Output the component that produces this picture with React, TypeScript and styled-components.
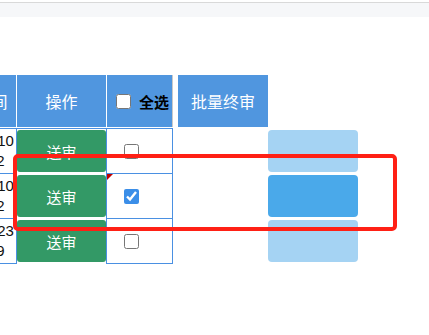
import React from "react";
import styled, { createGlobalStyle } from "styled-components";

const GlobalStyle = createGlobalStyle`
  html, body {
    margin: 0;
    padding: 0;
    background: #fff;
    overflow: hidden;
  }
  body {
    font-family: "Liberation Sans", "Noto Sans CJK SC", sans-serif;
  }
`;

const Page = styled.div`
  position: relative;
  width: 429px;
  height: 335px;
  overflow: hidden;
`;

const TopBar = styled.div`
  height: 14px;
  margin-top: 2px;
  border-top: 1px solid #d9d9d9;
  background: #f6f7f9;
`;

const Main = styled.div`
  display: flex;
  align-items: flex-start;
  padding-top: 58px;
`;

// table is scrolled sideways, so the time column is mostly hidden
const Table = styled.div`
  margin-left: -65px;
  display: flex;
  flex-direction: column;
`;

const HeadRow = styled.div`
  display: grid;
  grid-template-columns: 82px 90px 66px;
  border-bottom: 1px solid #fff;
`;

const HeadCell = styled.div<{ $gray?: boolean }>`
  height: 52px;
  background: #5096df;
  border-right: 1px solid ${(p) => (p.$gray ? "#c9c9c9" : "#fff")};
  color: #fff;
  font-size: 16px;
  display: flex;
  align-items: center;
  justify-content: center;
`;

const CheckHead = styled(HeadCell)`
  justify-content: flex-start;
  padding-left: 9px;
  gap: 8px;
  color: #000;
  font-weight: bold;
  font-size: 15px;
`;

const Body = styled.div`
  border-top: 1px solid #4a90e2;
`;

const Row = styled.div`
  display: grid;
  grid-template-columns: 82px 90px 66px;
  height: 45px;
`;

const TimeCell = styled.div`
  border-right: 1px solid #4a90e2;
  border-bottom: 1px solid #4a90e2;
  display: flex;
  flex-direction: column;
  justify-content: center;
  align-items: center;
  font-size: 15px;
  line-height: 20px;
  color: #111;
  white-space: nowrap;
`;

const OpCell = styled.div`
  border-right: 1px solid #4a90e2;
  padding: 1px 0 2px;
`;

const SendButton = styled.button`
  width: 100%;
  height: 42px;
  border: none;
  border-radius: 3px;
  background: #339966;
  color: #fff;
  font-size: 15px;
  font-family: "Noto Sans CJK SC", sans-serif;
  padding: 0;
`;

const CheckCell = styled.div`
  position: relative;
  border-right: 1px solid #4a90e2;
  border-bottom: 1px solid #4a90e2;
  display: flex;
  align-items: center;
  padding-left: 17px;
`;

const DirtyMark = styled.span`
  position: absolute;
  left: 0;
  top: 0;
  width: 0;
  height: 0;
  border-top: 6px solid #c00000;
  border-right: 6px solid transparent;
`;

const Check = styled.input.attrs({ type: "checkbox" })`
  width: 15px;
  height: 15px;
  margin: 0;
  accent-color: #3b8ee8;
`;

const Side = styled.div`
  display: grid;
  grid-template-columns: 90px 90px;
  grid-template-rows: 52px repeat(3, 42px);
  row-gap: 3px;
  margin-left: 5px;
`;

const BatchHead = styled.div`
  grid-column: 1;
  grid-row: 1;
  background: #5096df;
  color: #fff;
  font-size: 16px;
  display: flex;
  align-items: center;
  justify-content: center;
`;

const SideButton = styled.div<{ $active?: boolean; $row: number }>`
  grid-column: 2;
  grid-row: ${(p) => p.$row};
  border-radius: 4px;
  background: ${(p) => (p.$active ? "#4aa9ea" : "#a5d3f3")};
`;

const Highlight = styled.div`
  position: absolute;
  left: 13px;
  top: 154px;
  width: 384px;
  height: 77px;
  box-sizing: border-box;
  border: 4px solid #ff2015;
  border-radius: 5px;
  pointer-events: none;
`;

const rows = [
  { date: "2021-08-10", time: "10:20:32", checked: false },
  { date: "2021-08-10", time: "10:20:32", checked: true },
  { date: "2021-08-23", time: "09:15:09", checked: false },
];

export default function App() {
  return (
    <Page>
      <GlobalStyle />
      <TopBar />
      <Main>
        <Table>
          <HeadRow>
            <HeadCell>提交时间</HeadCell>
            <HeadCell>操作</HeadCell>
            <CheckHead $gray>
              <Check readOnly />
              全选
            </CheckHead>
          </HeadRow>
          <Body>
            {rows.map((r, i) => (
              <Row key={i}>
                <TimeCell>
                  <span>{r.date}</span>
                  <span>{r.time}</span>
                </TimeCell>
                <OpCell>
                  <SendButton>送审</SendButton>
                </OpCell>
                <CheckCell>
                  {r.checked && <DirtyMark />}
                  <Check checked={r.checked} readOnly />
                </CheckCell>
              </Row>
            ))}
          </Body>
        </Table>
        <Side>
          <BatchHead>批量终审</BatchHead>
          {rows.map((r, i) => (
            <SideButton key={i} $row={i + 2} $active={r.checked} />
          ))}
        </Side>
      </Main>
      <Highlight />
    </Page>
  );
}
